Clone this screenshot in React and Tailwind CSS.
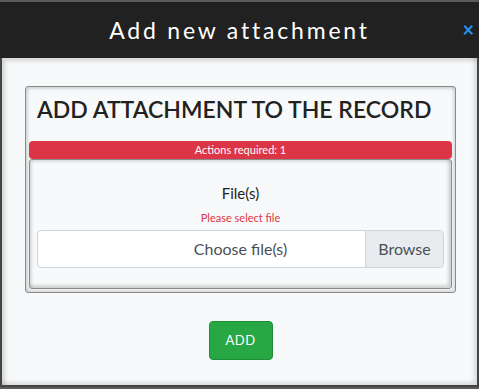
export default function App() {
    return (
        <div className="w-[479px] h-[389px] bg-[#5a5a5a] pt-[2px] overflow-hidden" style={{ fontFamily: 'Lato, "Liberation Sans", sans-serif' }}>
            {/* Header */}
            <div className="relative h-[56px] bg-[#212121] flex items-center justify-center">
                <h1 className="text-[23px] tracking-[2.8px] text-white font-normal">Add new attachment</h1>
                <span className="absolute right-[5px] top-[17px] text-[#2196f3] text-[20px] font-bold leading-none">×</span>
            </div>

            {/* Body */}
            <div className="h-[329px] bg-[#f8f9fa] border-l-2 border-r-2 border-b-2 border-[#444] shadow-[inset_3px_3px_4px_rgba(0,0,0,0.15),inset_-3px_-3px_4px_rgba(0,0,0,0.12)] pt-[28px] pl-[23px] pr-[21px]">
                <div className="border border-[#8a8a8a] rounded-[3px] shadow-[inset_2px_2px_3px_rgba(0,0,0,0.15),inset_-2px_-2px_3px_rgba(0,0,0,0.12)] px-[3px] pb-[3px]">
                    <h2 className="text-[23px] text-[#222] pt-[6px] pb-[16px] pl-[8px] leading-[32px] font-semibold">
                        ADD ATTACHMENT TO THE RECORD
                    </h2>
                    <div className="bg-[#dc3545] rounded-[4px] h-[18px] flex items-center justify-center text-white text-[11px]">
                        Actions required: 1
                    </div>
                    <div className="border border-[#8a8a8a] rounded-[3px] shadow-[inset_2px_2px_3px_rgba(0,0,0,0.12),inset_-3px_-3px_3px_rgba(0,0,0,0.15)] h-[130px] px-[7px] pt-[22px]">
                        <div className="text-center text-[15px] text-[#222]">File(s)</div>
                        <div className="text-center text-[11px] text-[#dc3545] mt-[5px]">Please select file</div>
                        <div className="relative mt-[4px] h-[38px] rounded-[4px] border border-[#ced4da] overflow-hidden bg-white flex items-center justify-center">
                            <span className="text-[16px] text-[#495057]">Choose file(s)</span>
                            <div className="absolute right-0 top-0 bottom-0 w-[78px] bg-[#e9ecef] border-l border-[#ced4da] flex items-center justify-center text-[16px] text-[#495057]">Browse</div>
                        </div>
                    </div>
                </div>
                <div className="flex justify-center mt-[28px]">
                    <button className="w-[64px] h-[39px] bg-[#28a745] border border-[#1e8e3a] rounded-[4px] text-white text-[13px] tracking-[0.5px]">
                        ADD
                    </button>
                </div>
            </div>
        </div>
    );
}
